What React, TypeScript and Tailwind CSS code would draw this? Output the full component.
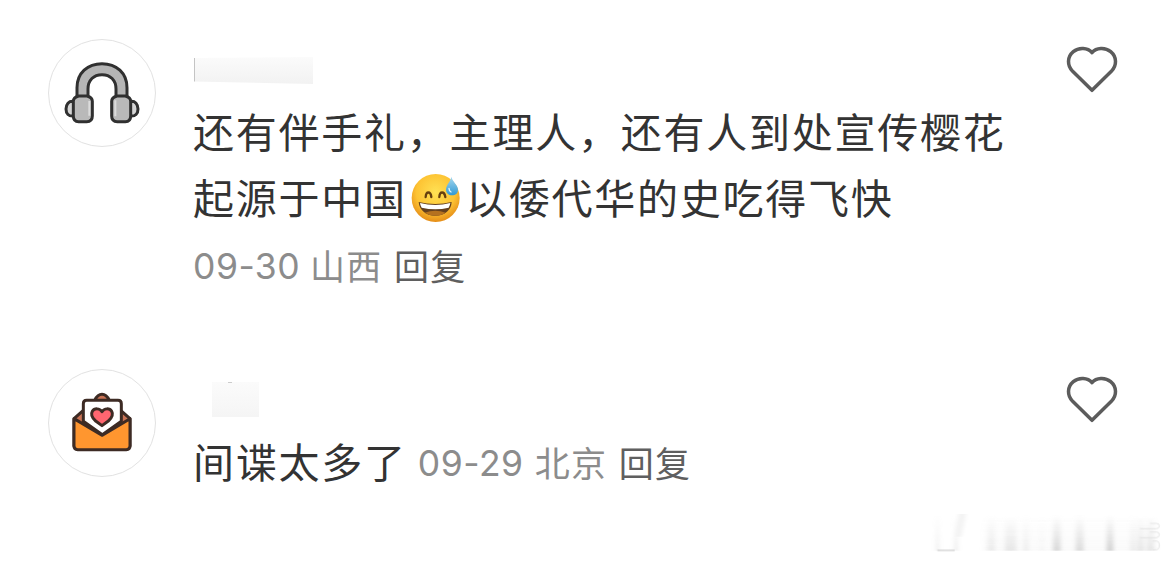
import { ReactNode } from "react";

const App = () => {
    return (
        <main className="relative w-[1170px] h-[563px] bg-white overflow-hidden font-['Noto_Sans_CJK_SC',sans-serif]">
            <Comment
                avatar={<HeadphonesIcon />}
                name={<span className="block w-[119px] h-[27px] ml-px mt-[18px] bg-linear-to-b from-[#fbfbfb] to-[#f2f2f2] border-l border-[#c4c4c4] [clip-path:polygon(0_4%,100%_0,100%_100%,0_91%)]" />}
            >
                <p className="mt-[13px] text-[41px] leading-[66px] tracking-[1.77px] text-[#333333] whitespace-nowrap">
                    还有伴手礼，主理人，还有人到处宣传樱花
                    <br />
                    起源于中国<SweatSmile />以倭代华的史吃得飞快
                </p>
                <p className="flex h-[66px] leading-[66px] mt-[3px]"><Meta date="09-30" place="山西" /></p>
            </Comment>
            <Comment
                avatar={<LetterIcon />}
                name={<span className="block w-[47px] h-[35px] ml-[19px] mt-[13px] bg-linear-to-b from-[#fbfbfb] to-[#f5f5f5]"><i className="block w-[4px] h-px ml-[16px] bg-[#cccccc]" /></span>}
            >
                <p className="mt-[10px] flex h-[66px] leading-[66px] whitespace-nowrap">
                    <span className="text-[41px] tracking-[1.77px] text-[#333333] mr-[11px]">间谍太多了</span>
                    <span className="flex pt-[2px]"><Meta date="09-29" place="北京" /></span>
                </p>
            </Comment>
            <Watermark />
        </main>
    )
}

export default App;


type CommentProps = {
    avatar: ReactNode;
    name: ReactNode;
    children: ReactNode;
}
function Comment({ avatar, name, children }: CommentProps) {
    return (
        <article className="flex items-start h-[330px] pt-[39px] pl-12 pr-[50px]">
            <section className="w-[108px] h-[108px] shrink-0 rounded-full border border-[#e2e2e2] overflow-hidden">
                {avatar}
            </section>
            <section className="ml-[37px] flex-1 min-w-0">
                {name}
                {children}
            </section>
            <button type="button" className="shrink-0 mt-[3px] cursor-pointer">
                <svg className="w-14 h-14" viewBox="42 36 168 168" fill="none" stroke="#5c5c5c" strokeWidth="10.5" strokeLinejoin="round">
                    <path d="M126 68C113 53 87 51 70 65C51 81 51 106 68 124L126 181L184 124C201 106 201 81 182 65C165 51 139 53 126 68Z" />
                </svg>
            </button>
        </article>
    )
}

function Meta({ date, place }: { date: string; place: string }) {
    return (
        <span className="flex items-start text-[35px] tracking-[1.2px] text-[#8c8c8c] whitespace-nowrap">
            <span className="font-['Inter'] text-[35.5px] w-[117px] tracking-[0.5px] pt-[2px]">{date}</span>
            <span className="w-[84px]">{place}</span>
            <span className="text-[#5f5f5f]">回复</span>
        </span>
    )
}

function HeadphonesIcon() {
    return (
        <svg className="w-[108px] h-[108px] -m-px" viewBox="24 27 324 324" stroke="#303030" strokeWidth="9" strokeLinejoin="round">
            <path d="M111 200V173C111 129 143 101 186 101S261 129 261 173V200H228V177C228 150 211 134 186 134S144 150 144 177V200Z" fill="#b5b5b5" />
            <path d="M101 214C86 212 78 223 78 237S86 260 101 258Z" fill="#d5d5d5" />
            <path d="M271 214C286 212 294 223 294 237S286 260 271 258Z" fill="#d5d5d5" />
            <path d="M116 198H141Q157 202 157 214V258Q157 275 140 275H116Q100 275 100 258V214Q100 202 116 198Z" fill="#b9b9b9" />
            <path d="M231 198H256Q272 202 272 214V258Q272 275 256 275H232Q215 275 215 258V214Q215 202 231 198Z" fill="#b9b9b9" />
            <path d="M148 213V257M226 211V259" stroke="#dcdcdc" strokeWidth="6" />
        </svg>
    )
}

function LetterIcon() {
    return (
        <svg className="w-[108px] h-[108px] -m-px" viewBox="24 27 324 324" stroke="#3d2b24" strokeWidth="9" strokeLinejoin="round">
            <path d="M102 176L164 121Q173 103 186 103T208 121L270 176V258H102Z" fill="#ca7355" />
            <path d="M130 184V131Q130 121 140 121H234Q244 121 244 131V184L187 224Z" fill="#ffffff" />
            <path d="M102 176L187 226L270 176V258Q270 269 259 269H113Q102 269 102 258Z" fill="#ff962f" />
            <path d="M186 155C179 144 163 144 157 154C150 167 160 177 167 183L186 197L205 183C212 177 222 167 215 154C209 144 193 144 186 155Z" fill="#ff6670" />
        </svg>
    )
}

function SweatSmile() {
    return (
        <svg className="inline-block w-[50px] h-[50px] ml-[4px] mr-[5px] align-[-9px]" viewBox="34 25 150 150">
            <defs>
                <radialGradient id="face" cx="0.5" cy="0.38" r="0.62">
                    <stop offset="0" stopColor="#ffe154" />
                    <stop offset="0.65" stopColor="#fdc333" />
                    <stop offset="1" stopColor="#e58d18" />
                </radialGradient>
                <linearGradient id="drop" x1="0" y1="0" x2="0" y2="1">
                    <stop offset="0" stopColor="#a5d8ef" />
                    <stop offset="1" stopColor="#3199d4" />
                </linearGradient>
            </defs>
            <circle cx="108" cy="100" r="72" fill="url(#face)" />
            <path d="M78 97C79 79 93 79 95 97M119 97C120 79 134 79 137 97" fill="none" stroke="#66400f" strokeWidth="7" strokeLinecap="round" />
            <path d="M57 112Q107 124 156 112C155 136 136 153 107 153S59 136 57 112Z" fill="#63401f" />
            <path d="M61 115Q107 127 152 115Q151 123 147 129Q107 138 66 129Q62 123 61 115Z" fill="#ffffff" />
            <path d="M75 144Q107 133 138 144Q125 153 107 153T75 144Z" fill="#b5711f" />
            <path d="M155 36C157 49 175 61 175 75C175 86 167 92 157 92S139 85 139 75C139 61 153 50 155 36Z" fill="url(#drop)" />
            <path d="M148 71Q148 79 154 82" fill="none" stroke="#e3f7ff" strokeWidth="4" strokeLinecap="round" />
        </svg>
    )
}

// smudged vertical streaks: x, width, opacity
const streaks = [
    [48, 9, 0.25], [103, 10, 0.28], [203, 22, 0.22], [255, 34, 0.28], [310, 16, 0.18], [362, 8, 0.12],
    [399, 23, 0.5], [467, 24, 0.45], [560, 20, 0.6], [630, 18, 0.2], [652, 20, 0.3], [680, 22, 0.3],
];

function Watermark() {
    return (
        <svg className="absolute left-[920px] top-[500px] w-[250px] h-[63px]" viewBox="0 0 750 189">
            <defs>
                <linearGradient id="streak" x1="0" y1="0" x2="0" y2="1">
                    <stop offset="0" stopColor="#bdbdbd" stopOpacity="0" />
                    <stop offset="1" stopColor="#b5b5b5" />
                </linearGradient>
                <filter id="smudge"><feGaussianBlur stdDeviation="6 1" /></filter>
            </defs>
            <g filter="url(#smudge)">
                <rect x="190" y="50" width="520" height="102" fill="url(#streak)" opacity="0.06" />
                {streaks.map(([x, w, o]) => (
                    <rect key={x} x={x} y="45" width={w} height="107" fill="url(#streak)" opacity={o} />
                ))}
                <path d="M116 42H138L124 110H106Z" fill="#f3f3f3" />
            </g>
            <path d="M52 151H104" stroke="#c2c2c2" strokeWidth="3" />
            <path d="M690 70H709Q718 70 718 78T709 86H660M690 96H709Q718 96 718 104T709 113H660M698 123H708Q718 123 718 136T708 149H698" fill="none" stroke="#e4e4e4" strokeWidth="3" />
        </svg>
    )
}
